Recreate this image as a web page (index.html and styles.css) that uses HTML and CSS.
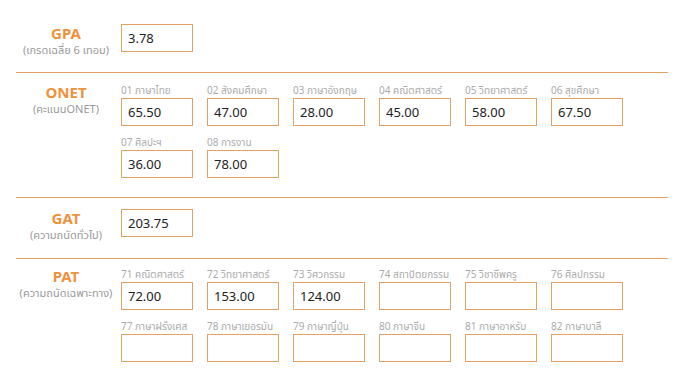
FILE: index.html
```html
<!DOCTYPE html>
<html lang="th">
<head>
    <meta charset="UTF-8">
    <meta name="viewport" content="width=device-width, initial-scale=1.0">
    <title>คะแนน GPA ONET GAT PAT</title>
    <link rel="stylesheet" href="styles.css">
</head>
<body>
    <div class="score-form">
        <div class="score-row row-gpa">
            <div class="score-title">
                <h2>GPA</h2>
                <span>(เกรดเฉลี่ย 6 เทอม)</span>
            </div>
            <div class="score-fields">
                <input type="text" class="score-input" value="3.78">
            </div>
        </div>

        <div class="score-row row-onet">
            <div class="score-title">
                <h2>ONET</h2>
                <span>(คะแนนONET)</span>
            </div>
            <div class="score-grid">
                <label class="score-cell"><span>01 ภาษาไทย</span><input type="text" class="score-input" value="65.50"></label>
                <label class="score-cell"><span>02 สังคมศึกษา</span><input type="text" class="score-input" value="47.00"></label>
                <label class="score-cell"><span>03 ภาษาอังกฤษ</span><input type="text" class="score-input" value="28.00"></label>
                <label class="score-cell"><span>04 คณิตศาสตร์</span><input type="text" class="score-input" value="45.00"></label>
                <label class="score-cell"><span>05 วิทยาศาสตร์</span><input type="text" class="score-input" value="58.00"></label>
                <label class="score-cell"><span>06 สุขศึกษา</span><input type="text" class="score-input" value="67.50"></label>
                <label class="score-cell"><span>07 ศิลปะฯ</span><input type="text" class="score-input" value="36.00"></label>
                <label class="score-cell"><span>08 การงาน</span><input type="text" class="score-input" value="78.00"></label>
            </div>
        </div>

        <div class="score-row row-gat">
            <div class="score-title">
                <h2>GAT</h2>
                <span>(ความถนัดทั่วไป)</span>
            </div>
            <div class="score-fields">
                <input type="text" class="score-input" value="203.75">
            </div>
        </div>

        <div class="score-row row-pat">
            <div class="score-title">
                <h2>PAT</h2>
                <span>(ความถนัดเฉพาะทาง)</span>
            </div>
            <div class="score-grid">
                <label class="score-cell"><span>71 คณิตศาสตร์</span><input type="text" class="score-input" value="72.00"></label>
                <label class="score-cell"><span>72 วิทยาศาสตร์</span><input type="text" class="score-input" value="153.00"></label>
                <label class="score-cell"><span>73 วิศวกรรม</span><input type="text" class="score-input" value="124.00"></label>
                <label class="score-cell"><span>74 สถาปัตยกรรม</span><input type="text" class="score-input" value=""></label>
                <label class="score-cell"><span>75 วิชาชีพครู</span><input type="text" class="score-input" value=""></label>
                <label class="score-cell"><span>76 ศิลปกรรม</span><input type="text" class="score-input" value=""></label>
                <label class="score-cell"><span>77 ภาษาฝรั่งเศส</span><input type="text" class="score-input" value=""></label>
                <label class="score-cell"><span>78 ภาษาเยอรมัน</span><input type="text" class="score-input" value=""></label>
                <label class="score-cell"><span>79 ภาษาญี่ปุ่น</span><input type="text" class="score-input" value=""></label>
                <label class="score-cell"><span>80 ภาษาจีน</span><input type="text" class="score-input" value=""></label>
                <label class="score-cell"><span>81 ภาษาอาหรับ</span><input type="text" class="score-input" value=""></label>
                <label class="score-cell"><span>82 ภาษาบาลี</span><input type="text" class="score-input" value=""></label>
            </div>
        </div>
    </div>
</body>
</html>
```

FILE: styles.css
```css
body {
    margin: 0;
    background-color: #ffffff;
    font-family: Tahoma, "Noto Sans", "Noto Sans Thai", "Liberation Sans", sans-serif;
}
.score-form {
    width: 652px;
    margin-left: 16px;
}
.score-row {
    display: flex;
    align-items: flex-start;
    border-bottom: 1px solid #e3a263;
}
.row-gpa {
    padding: 24px 0 20px;
}
.row-onet {
    padding: 10px 0 19px;
}
.row-gat {
    padding: 11px 0 21px;
}
.row-pat {
    padding: 8px 0 9px;
    border-bottom: none;
}
.score-title {
    width: 100px;
    height: 28px;
    margin-right: 5px;
    text-align: center;
}
.score-title h2 {
    margin: 0;
    font-size: 15px;
    line-height: 18px;
    font-weight: bold;
    color: #f0913b;
}
.score-title span {
    display: block;
    font-size: 11px;
    line-height: 16px;
    color: #9a9a9a;
    white-space: nowrap;
}
.score-grid {
    display: grid;
    grid-template-columns: repeat(6, 72px);
    column-gap: 14px;
    row-gap: 9px;
}
.score-cell {
    display: flex;
    flex-direction: column;
}
.score-cell span {
    font-size: 10px;
    line-height: 14px;
    margin-bottom: 1px;
    color: #ababab;
    white-space: nowrap;
}
.score-input {
    width: 72px;
    height: 28px;
    margin: 0;
    padding: 0 6px;
    box-sizing: border-box;
    border: 1px solid #e3a263;
    font-family: Tahoma, "Noto Sans", "Noto Sans Thai", "Liberation Sans", sans-serif;
    font-size: 13px;
    color: #222222;
    background-color: #ffffff;
    outline: none;
}
```
